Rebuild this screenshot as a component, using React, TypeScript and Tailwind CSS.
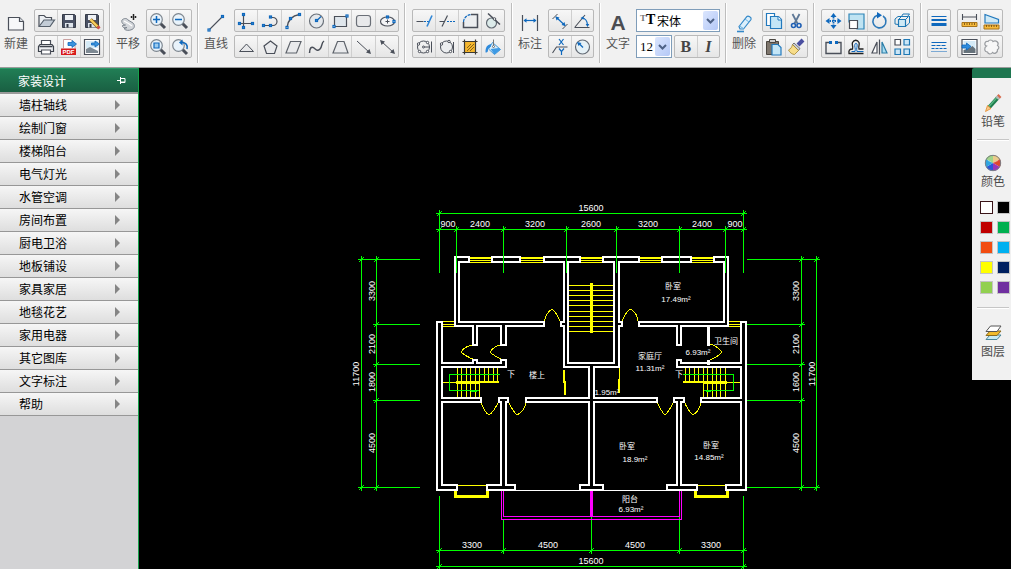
import type { ReactNode } from "react";

const MENU = [
  "墙柱轴线",
  "绘制门窗",
  "楼梯阳台",
  "电气灯光",
  "水管空调",
  "房间布置",
  "厨电卫浴",
  "地板铺设",
  "家具家居",
  "地毯花艺",
  "家用电器",
  "其它图库",
  "文字标注",
  "帮助",
];

const SWATCHES = [
  { name: "白色", cls: "bg-white border-[#3a1418]" },
  { name: "黑色", cls: "bg-black border-[#c4c4c4]" },
  { name: "红色", cls: "bg-[#c00000] border-[#c4c4c4]" },
  { name: "绿色", cls: "bg-[#00b050] border-[#c4c4c4]" },
  { name: "橙色", cls: "bg-[#f24c11] border-[#c4c4c4]" },
  { name: "天蓝", cls: "bg-[#00b0f0] border-[#c4c4c4]" },
  { name: "黄色", cls: "bg-[#ffff00] border-[#c4c4c4]" },
  { name: "深蓝", cls: "bg-[#002060] border-[#c4c4c4]" },
  { name: "浅绿", cls: "bg-[#92d050] border-[#c4c4c4]" },
  { name: "紫色", cls: "bg-[#7030a0] border-[#c4c4c4]" },
];

const INK = "#4a4f59";
const BLUE = "#0e68bd";

/* ---------- icons, all on a 20x20 grid ---------- */

function Svg({ children }: { children: ReactNode }) {
  return (
    <svg viewBox="0 0 20 20" className="size-5 shrink-0" fill="none" stroke={INK} strokeWidth="1.2" aria-hidden>
      {children}
    </svg>
  );
}

// blue grip point on a shape
function Dot({ x, y }: { x: number; y: number }) {
  return <rect x={x - 1} y={y - 1} width="2" height="2" fill="#fff" stroke={BLUE} strokeWidth="1.2" />;
}

function Magnifier({ children }: { children?: ReactNode }) {
  return (
    <Svg>
      <path d="M12.500 12.500l4.500 4.500" strokeWidth="3" />
      <circle cx="8.500" cy="8.500" r="5.800" fill="#e9f3fb" stroke="#7d868f" />
      {children}
    </Svg>
  );
}

const floppy = (
  <>
    <path d="M3.500 3.500h12l1 1v12h-13z" fill="#4a5164" stroke="#363c49" strokeWidth="1" />
    <path d="M6 4h8v5H6z" fill="#eef1f5" stroke="none" />
    <path d="M6 12h8v4.500H6z" fill="#dfe5ec" stroke="none" />
    <path d="M7.500 13h2v3.500h-2z" fill="#2f3542" stroke="none" />
  </>
);

const newIcon = (
  <Svg>
    <path d="M2.500 4.500h11l4 4v8.500h-15z" fill="#f7f8fa" />
    <path d="M13.500 4.500v4h4" fill="#dde1e6" />
  </Svg>
);

const panIcon = (
  <Svg>
    <path
      d="M4 7c2-2 5-2 6 0l5 3c2 2 2 5-1 6.500-3 1.500-7 1-8-1l3-1c-3 1-5-.5-4.500-2l3-.5C5 12 3 9 4 7z"
      fill="#d3d6da"
      stroke="#7c848e"
      strokeWidth="1"
    />
    <path d="M6 8c2 1 4 2 8 5" stroke="#fff" />
    <path d="M15.500 1v6M12.500 4h6M14.500 2h2M14.500 6h2M13.500 3v2M17.500 3v2" stroke="#222" strokeWidth="1" />
  </Svg>
);

const lineIcon = (
  <Svg>
    <path d="M3.500 16.500l13-13" strokeWidth="1.100" />
    <Dot x={3} y={17} />
    <Dot x={16.5} y={3.5} />
  </Svg>
);

const dimIcon = (
  <Svg>
    <path d="M2.500 2v16M17.500 2v16" />
    <path d="M4 7.500h12" stroke={BLUE} />
    <path d="M3.500 7.500l3-2.200v4.400zM16.500 7.500l-3-2.200v4.400z" fill={BLUE} stroke="none" />
  </Svg>
);

const textIcon = (
  <span className="flex h-5 items-center justify-center font-['Liberation_Sans',sans-serif] text-[21px] leading-5 font-bold text-[#4b4d52]">
    A
  </span>
);

const eraserIcon = (
  <Svg>
    <path d="M5 13.500L13 3.500c1-1 5 .5 4 3L9.500 16H6z" fill="#dceffb" stroke="#3488c8" />
    <path d="M5.500 13l4 2.500M11 6l4 3" stroke="#6cb2e0" strokeWidth="1" />
    <path d="M3 18.500h7" stroke="#3488c8" strokeWidth="1.600" />
  </Svg>
);

const fileTop = [
  {
    label: "打开",
    icon: (
      <Svg>
        <path d="M3 15V4.500h5l2 2h5.500V9" fill="#eceff3" />
        <path d="M3 15.500L8 9h10.500L14 15.500z" fill="#c3ccd6" stroke="#56606c" />
      </Svg>
    ),
  },
  { label: "保存", icon: <Svg>{floppy}</Svg> },
  {
    label: "另存为",
    icon: (
      <Svg>
        {floppy}
        <path d="M8.500 8.500l8 8" stroke="#8a5a10" strokeWidth="3.500" />
        <path d="M8.500 8.500l7 7" stroke="#f6d05f" strokeWidth="2.200" />
        <path d="M15.500 15.500l2 2" stroke="#d0504a" strokeWidth="3" />
      </Svg>
    ),
  },
];

const fileBottom = [
  {
    label: "打印",
    icon: (
      <Svg>
        <path d="M5.500 8V3.500h9V8" fill="#fff" />
        <path d="M4 7.500h12l1.500 2v5h-15v-5z" fill="#eceef1" stroke="#3c424b" />
        <path d="M3.500 9.500h13" stroke="#3c424b" strokeWidth="1.500" />
        <path d="M5.500 13h9v4h-9z" fill="#fff" />
      </Svg>
    ),
  },
  {
    label: "导出PDF",
    icon: (
      <Svg>
        <path d="M4.500 11V2.500h7.500l4 4v5" fill="#fff" stroke="#c9a0a0" strokeWidth="1" />
        <path d="M9 5.500h4v-2l4.500 3.500-4.500 3.500v-2H9z" fill="#3b93dc" stroke={BLUE} strokeWidth=".8" />
        <rect x="2" y="11.500" width="15" height="6.500" fill="#d81c1c" stroke="none" />
        <text
          x="9.500"
          y="17"
          textAnchor="middle"
          fontSize="6"
          fontWeight="700"
          fill="#fff"
          stroke="none"
          fontFamily="Liberation Sans, sans-serif"
        >
          PDF
        </text>
      </Svg>
    ),
  },
  {
    label: "导出图片",
    icon: (
      <Svg>
        <path d="M2.500 2.500h15v15h-15z" fill="#fff" />
        <path d="M4 4h12v7H4z" fill="#d5eaf6" stroke="none" />
        <path d="M4 16v-4l4-2 8 4v2z" fill="#7d8993" stroke="none" />
        <path d="M9.500 6h3.500V4l4.500 3-4.500 3V8H9.500z" fill="#3b93dc" stroke={BLUE} strokeWidth=".8" />
      </Svg>
    ),
  },
];

const viewTop = [
  { label: "放大", icon: <Magnifier><path d="M8.500 5v7M5 8.500h7" stroke={BLUE} strokeWidth="1.500" /></Magnifier> },
  { label: "缩小", icon: <Magnifier><path d="M5 8.500h7" stroke={BLUE} strokeWidth="1.500" /></Magnifier> },
];

const viewBottom = [
  { label: "窗口缩放", icon: <Magnifier><path d="M6 6h5v5H6z" stroke={BLUE} fill="#9ccbee" /></Magnifier> },
  {
    label: "上一视图",
    icon: (
      <Magnifier>
        <path d="M17 12c1-4-1-6.500-5.500-6.500" stroke={BLUE} strokeWidth="1.600" />
        <path d="M12.500 2.500L9 5.500l3.500 3z" fill={BLUE} stroke="none" />
      </Magnifier>
    ),
  },
];

const drawTop = [
  {
    label: "坐标轴",
    icon: (
      <Svg>
        <path d="M7.500 3.500v13M3.500 12.500h14" />
        <Dot x={7.5} y={3.5} />
        <Dot x={3.5} y={12.5} />
        <Dot x={16.5} y={12.5} />
        <Dot x={7.5} y={16.5} />
      </Svg>
    ),
  },
  {
    label: "多段线",
    icon: (
      <Svg>
        <path d="M3.500 14.500H13a4 4 0 0 0 0-8h-2" />
        <Dot x={3.5} y={14.5} />
        <Dot x={10.5} y={14.5} />
        <Dot x={10.5} y={6} />
      </Svg>
    ),
  },
  {
    label: "圆弧",
    icon: (
      <Svg>
        <path d="M4 16.500C5 9 9 4.500 16.500 3.500" strokeWidth="1.500" />
        <Dot x={4} y={16.5} />
        <Dot x={7.5} y={7.5} />
        <Dot x={16.5} y={3.5} />
      </Svg>
    ),
  },
  {
    label: "圆",
    icon: (
      <Svg>
        <circle cx="10.500" cy="10" r="7" fill="#e4e8ec" stroke="#6a717a" />
        <path d="M10.500 10l4.500-4.500" stroke={BLUE} />
        <Dot x={10.5} y={9.5} />
      </Svg>
    ),
  },
  {
    label: "矩形",
    icon: (
      <Svg>
        <path d="M4.500 5.500h12v10h-12z" fill="#dfe6ec" />
        <Dot x={17} y={5} />
        <Dot x={4} y={15.5} />
      </Svg>
    ),
  },
  {
    label: "圆角矩形",
    icon: (
      <Svg>
        <rect x="3.500" y="4.500" width="14" height="11" rx="2.500" fill="#e8e9eb" stroke="#6a6f77" />
      </Svg>
    ),
  },
  {
    label: "椭圆",
    icon: (
      <Svg>
        <ellipse cx="10.500" cy="10.500" rx="7" ry="4.500" fill="#f4f5f7" />
        <path d="M10.500 8.500v4M8.500 10.500h4" strokeWidth="1" />
        <Dot x={10.5} y={6} />
        <Dot x={17} y={10.5} />
      </Svg>
    ),
  },
];

const drawBottom = [
  { label: "三角形", icon: <Svg><path d="M3.500 14.500L10.500 7l7 7.500z" fill="#e6e7e9" strokeWidth="1" /></Svg> },
  { label: "多边形", icon: <Svg><path d="M10.500 4l6.500 5-2.500 7.500h-8L4 9z" fill="#e9eaec" /></Svg> },
  { label: "平行四边形", icon: <Svg><path d="M7.500 4.500H18L13.500 16H3z" fill="#e9eaec" stroke="#5f646c" /></Svg> },
  { label: "样条曲线", icon: <Svg><path d="M3.500 16c0-5 2-7 4.500-5s3.500 3.500 6 1S15 6 18 4" strokeWidth="1.500" /></Svg> },
  { label: "梯形", icon: <Svg><path d="M7.500 4.500h6.500L18 16H3z" fill="#e9eaec" stroke="#5f646c" /></Svg> },
  {
    label: "箭头",
    icon: (
      <Svg>
        <path d="M4 4l13 12" strokeWidth="1" />
        <path d="M18 17l-5-1.500 3.500-3.500z" fill={INK} stroke="none" />
      </Svg>
    ),
  },
  {
    label: "双向箭头",
    icon: (
      <Svg>
        <path d="M4 4l13 12" strokeWidth="1" />
        <path d="M18 17l-5-1.500 3.500-3.500zM3 3l5 1.500L4.500 8z" fill={INK} stroke="none" />
      </Svg>
    ),
  },
];

const editTop = [
  {
    label: "延伸",
    icon: (
      <Svg>
        <path d="M2.500 10.500h7" />
        <path d="M10 10.500h2M13 10.500h2" stroke={BLUE} />
        <path d="M13 15.500L18 4.500" stroke="#2f86d6" strokeWidth="1.600" />
      </Svg>
    ),
  },
  {
    label: "修剪",
    icon: (
      <Svg>
        <path d="M2.500 10.500h4.500M5 15.500L10.500 4.500" />
        <path d="M10 10.500h2M13 10.500h2M16 10.500h2" stroke={BLUE} />
      </Svg>
    ),
  },
  {
    label: "圆角",
    icon: (
      <Svg>
        <path d="M3.500 16.500V11a8 8 0 0 1 8-7.500h6v13z" fill="#eceef0" stroke="none" />
        <path d="M11 3.500h6.500v13h-14V11" strokeWidth="1.500" />
        <path d="M3.500 11a8 8 0 0 1 7.500-7.500" stroke={BLUE} strokeDasharray="3 1" />
      </Svg>
    ),
  },
  {
    label: "切线",
    icon: (
      <Svg>
        <circle cx="8.500" cy="12" r="5" fill="#dcebea" stroke="#636b74" />
        <path d="M5 2.500l12 11" strokeWidth="1.500" />
        <circle cx="11.500" cy="8" r="1.300" fill="#fff" strokeWidth="1" />
      </Svg>
    ),
  },
];

const editBottom = [
  {
    label: "圆心捕捉",
    icon: (
      <Svg>
        <circle cx="9.500" cy="10" r="6" strokeWidth="1" />
        <circle cx="9.500" cy="10" r="1" strokeWidth="1" />
        <path d="M10.500 10h5M17.500 4.500v11" strokeWidth="1" />
        <g fill="#fff" strokeWidth="1">
          <circle cx="4.500" cy="7" r="1.200" />
          <circle cx="5.500" cy="14.500" r="1.200" />
          <circle cx="13.500" cy="5.500" r="1.200" />
          <circle cx="13.500" cy="14.500" r="1.200" />
        </g>
      </Svg>
    ),
  },
  {
    label: "象限捕捉",
    icon: (
      <Svg>
        <circle cx="9.500" cy="10" r="6" fill="#eceef0" strokeWidth="1" />
        <path d="M16.500 5v11" strokeWidth="1" />
        <g fill="#fff" strokeWidth="1">
          <circle cx="4.500" cy="7" r="1.200" />
          <circle cx="12" cy="4.500" r="1.200" />
          <circle cx="13.500" cy="14.500" r="1.200" />
        </g>
      </Svg>
    ),
  },
  {
    label: "填充图案",
    icon: (
      <Svg>
        <path d="M4.500 4.500h11v11h-11z" fill="#f4b62e" stroke="none" />
        <path d="M7 11l4-4M7 14l7-7M10 14l4-4" stroke="#7d5a14" strokeWidth=".9" />
        <path d="M2.500 4.500h15M2.500 15.500h15M4.500 2.500v15M15.500 2.500v15" stroke="#3b3934" strokeWidth="1.200" />
      </Svg>
    ),
  },
  {
    label: "颜料桶",
    icon: (
      <Svg>
        <path d="M9.500 5.500l8 7-6 5-6-5.500z" fill="#d6ecfa" stroke="#4798d6" strokeWidth="1" />
        <path d="M7.500 12l8.500-1 1.500 1.500-6 5z" fill="#3e9ae4" stroke="none" />
        <path d="M8 7C4 8 2.500 10 2.500 15.500c2 .5 2.500-1 2.500-2.500s1.500-2.500 3-3.500z" fill="#2f8bdc" stroke="none" />
        <path d="M10.500 2.500v6" stroke="#777" strokeWidth="1" />
        <circle cx="10.500" cy="9.500" r="1" fill="#fff" stroke="#555" strokeWidth=".8" />
      </Svg>
    ),
  },
];

const dimTop = [
  {
    label: "对齐标注",
    icon: (
      <Svg>
        <path d="M2.500 8l5-5M12.500 18l5-5" strokeWidth="1" />
        <path d="M6 6l9 8.500" stroke={BLUE} />
        <path d="M5.500 5.500l4 1-3 3zM15.500 15l-4-1 3-3z" fill={BLUE} stroke="none" />
      </Svg>
    ),
  },
  {
    label: "角度标注",
    icon: (
      <Svg>
        <path d="M2.500 16.500h15M3 16L13 4" strokeWidth="1.100" />
        <path d="M10 7c3 0 5.500 3 5.500 7" stroke={BLUE} />
        <path d="M15.500 16l-1.800-3h3.600zM8.500 7l3-1.800v3.600z" fill={BLUE} stroke="none" />
      </Svg>
    ),
  },
];

const dimBottom = [
  {
    label: "坐标标注",
    icon: (
      <Svg>
        <path d="M2.500 16l4-6h11" strokeWidth="1.100" />
        <path d="M9 2l4.500 6M13.500 2L9 8M9 11.500l2.500 3 2.500-3M11.500 14.500V18" stroke={BLUE} />
      </Svg>
    ),
  },
  {
    label: "半径标注",
    icon: (
      <Svg>
        <circle cx="10.500" cy="10" r="7" fill="#e6f1f6" stroke="#646b75" />
        <path d="M11 10.500L7 6.500" stroke={BLUE} />
        <path d="M5 5l4.500 1L6.500 9z" fill={BLUE} stroke="none" />
      </Svg>
    ),
  },
];

const clipTop = [
  {
    label: "复制",
    icon: (
      <Svg>
        <path d="M2.500 2.500h8v12h-8z" fill="#fff" stroke="#2279bd" />
        <path d="M6.500 5.500h8l3 3v9h-11z" fill="#c4e6f7" stroke="#2279bd" />
        <path d="M14 5.500v3.500h3.500" fill="#fff" stroke="#2279bd" strokeWidth="1" />
      </Svg>
    ),
  },
  {
    label: "剪切",
    icon: (
      <Svg>
        <path d="M6.500 3l5 9.500M13.500 3l-5 9.500" stroke="#5e7896" strokeWidth="1.800" />
        <circle cx="7.500" cy="14.500" r="2" stroke="#1f5fb4" strokeWidth="1.600" />
        <circle cx="13" cy="14.500" r="2" stroke="#1f5fb4" strokeWidth="1.600" />
      </Svg>
    ),
  },
];

const clipBottom = [
  {
    label: "粘贴",
    icon: (
      <Svg>
        <path d="M2.500 4.500h12v13h-12z" fill="#7d756c" stroke="#4b4640" strokeWidth="1" />
        <path d="M5.500 2.500h6v3h-6z" fill="#ccc" stroke="#4b4640" strokeWidth="1" />
        <path d="M8 7.500h6l3 3v7.500H8z" fill="#c4e6f7" stroke="#2279bd" />
      </Svg>
    ),
  },
  {
    label: "格式刷",
    icon: (
      <Svg>
        <path d="M17 3l-5 5" stroke="#4a4fa0" strokeWidth="4" />
        <path d="M8 6l6 5.500-1.500 2L6.500 7.500z" fill="#c9ccd4" stroke="#555" strokeWidth=".8" />
        <path d="M6.500 7.500l6 6-4 4c-2 0-5-2-6-4.500 2-1 3.500-3 4-5.500z" fill="#f7dd8a" stroke="#a5852f" strokeWidth=".8" />
      </Svg>
    ),
  },
];

const modifyTop = [
  {
    label: "移动",
    icon: (
      <Svg>
        <path d="M10.500 2l3 4h-6zM10.500 18l3-4h-6zM2.500 10l4-3v6zM18.500 10l-4-3v6z" fill={BLUE} stroke="none" />
        <path d="M10.500 6v8M6.500 10h8" strokeWidth="1.800" stroke={BLUE} strokeDasharray="1.500 1" />
      </Svg>
    ),
  },
  {
    label: "缩放",
    icon: (
      <Svg>
        <path d="M3 3h15v15H11v-7H3z" fill="#bfe3f2" stroke="#2f86b8" />
        <path d="M3.500 9.500h8v8h-8z" fill="#fff" />
      </Svg>
    ),
  },
  {
    label: "旋转",
    icon: (
      <Svg>
        <path d="M8.500 4.200a6.500 6.500 0 1 0 5.500.8" stroke="#2c78b8" strokeWidth="1.600" />
        <path d="M8 1l5 3.200-5 3.300z" fill={BLUE} stroke="none" />
      </Svg>
    ),
  },
  {
    label: "三维",
    icon: (
      <Svg>
        <path d="M6.500 8.500h7v7h-7z" fill="#cfeaf6" stroke="#1f78b4" />
        <path
          d="M6.500 8.500l3-3h7l-3 3M13.500 15.500l4-3.500V5M3 8l3-2.500h5M3 8v5l3 .5M11 3h6.500l-2 2.500M9.500 5.500L11 3"
          stroke="#1f78b4"
          strokeWidth="1"
        />
      </Svg>
    ),
  },
];

const modifyBottom = [
  {
    label: "打断",
    icon: (
      <Svg>
        <path d="M6 5.500H3v11h15v-11h-3" strokeWidth="1.400" />
        <path d="M6 4h3v3H6zM12 4h3v3h-3z" fill={BLUE} stroke="none" />
      </Svg>
    ),
  },
  {
    label: "偏移",
    icon: (
      <Svg>
        <path
          d="M17.500 12H13c-1-3 1-4 0-6.500-1.500-3-5-3-6.500 0-1 2.500 1 3.500 0 6.500-3 0-4 1.500-3.500 4.500h14.500"
          stroke="#222"
          strokeWidth="1.300"
        />
        <path d="M5.500 14.500H9c1-3-1-5 0-7.500.5-1 1.500-1 2 0 .7 3-1 4 0 7.500h6.500" stroke={BLUE} strokeWidth="1" />
      </Svg>
    ),
  },
  {
    label: "镜像",
    icon: (
      <Svg>
        <path d="M8 5v11H3z" fill="#fff" />
        <path d="M13 5v11h5z" fill="#a8dcf0" stroke="#2b7da8" />
        <path d="M10.500 2.500v15" />
      </Svg>
    ),
  },
  {
    label: "阵列",
    icon: (
      <Svg>
        <path d="M3 2.500h5.500V8H3z" fill="#fff" />
        <path d="M12 2.500h5.500V8H12zM3 12h5.500v5.500H3zM12 12h5.500v5.500H12z" fill="#cbe6f7" stroke="#1f78b4" />
      </Svg>
    ),
  },
];

const measureTop = [
  {
    label: "测距",
    icon: (
      <Svg>
        <path d="M3.500 3v6M17.500 3v6M4 6h13" strokeWidth="1.100" />
        <path d="M3 11.500h15v4H3z" fill="#f6b93b" stroke="#a9741a" strokeWidth="1" />
        <path d="M5.500 12v2M8 12v2M10.500 12v2M13 12v2M15.500 12v2" stroke="#6d4a10" strokeWidth=".8" />
      </Svg>
    ),
  },
  {
    label: "测面积",
    icon: (
      <Svg>
        <path d="M4 3.500l13.500 5V12H4z" fill="#cfeaf7" stroke="#2279bd" />
        <path d="M3 14h15v4H3z" fill="#f6b93b" stroke="#a9741a" strokeWidth="1" />
        <path d="M5.500 14v2M8 14v2M10.500 14v2M13 14v2M15.500 14v2" stroke="#6d4a10" strokeWidth=".8" />
      </Svg>
    ),
  },
];

const measureBottom = [
  {
    label: "插入图片",
    icon: (
      <Svg>
        <path d="M3 2.500h15v15H3z" fill="#fff" />
        <path d="M4.500 4h12v8h-12z" fill="#d5eaf6" stroke="none" />
        <path d="M4.500 16v-3l6-2 3-2 3 3v4z" fill="#66727b" stroke="none" />
        <path d="M3 8h4.500V6l4.500 3.500L7.500 13v-2H3z" fill="#2f8bdc" stroke={BLUE} strokeWidth=".8" />
      </Svg>
    ),
  },
  {
    label: "云线",
    icon: (
      <Svg>
        <path
          d="M5.500 9c-3-1-1.500-5.500 1.500-4.500 1-2 4-2 5 0 3-2 6.500 1.500 4.500 4 2 1 1.500 3.500 0 4 .5 3-3 5-5 3-2 2.500-4.500 1.500-5-.5-3.500 0-3.500-4.500-1-6z"
          fill="#f7f7f7"
          stroke="#9a9da1"
        />
      </Svg>
    ),
  },
];

const weightTop = [
  {
    label: "线宽",
    icon: (
      <Svg>
        <path d="M2.500 5.500h15" stroke={BLUE} strokeWidth="1" />
        <path d="M2.500 9h15" stroke={BLUE} strokeWidth="2" />
        <path d="M2.500 13.500h15" stroke={BLUE} strokeWidth="3" />
      </Svg>
    ),
  },
];

const weightBottom = [
  {
    label: "线型",
    icon: (
      <Svg>
        <g stroke={BLUE} strokeWidth="1">
          <path d="M2.500 5.500h15" />
          <path d="M2.500 8.500h15" strokeDasharray="4 1" />
          <path d="M2.500 11.500h15" strokeDasharray="3 1" />
          <path d="M2.500 14.500h15" strokeDasharray="1 1" />
        </g>
      </Svg>
    ),
  },
];

const letterIcons = [
  { label: "粗体", icon: <span className="font-['Liberation_Serif',serif] text-base font-bold">B</span> },
  { label: "斜体", icon: <span className="font-['Liberation_Serif',serif] text-base font-bold italic">I</span> },
];

/* ---------- toolbar pieces ---------- */

type Tool = { label: string; icon: ReactNode };

function ToolRow({ tools, className = "" }: { tools: Tool[]; className?: string }) {
  return (
    <div
      className={`flex h-[23px] overflow-hidden rounded-xs border border-[#b9b9b9] bg-linear-to-b from-[#f7f7f7] to-[#e6e6e6] ${className}`}
    >
      {tools.map((t) => (
        <button
          key={t.label}
          type="button"
          aria-label={t.label}
          className="flex min-w-0 flex-1 items-center justify-center border-l border-[#cfcfcf] text-[#444] first:border-l-0 hover:bg-white"
        >
          {t.icon}
        </button>
      ))}
    </div>
  );
}

function Rows({ top, bottom, className }: { top: Tool[]; bottom: Tool[]; className: string }) {
  return (
    <div className="flex shrink-0 flex-col gap-[3px]">
      <ToolRow tools={top} className={className} />
      <ToolRow tools={bottom} className={className} />
    </div>
  );
}

function BigTool({ label, children }: { label: string; children: ReactNode }) {
  return (
    <button type="button" className="flex w-6 shrink-0 flex-col items-center gap-0.5 self-start pt-1 text-[#555]">
      {children}
      <span className="text-xs leading-4 whitespace-nowrap">{label}</span>
    </button>
  );
}

function Group({ children, className = "px-[5px]" }: { children: ReactNode; className?: string }) {
  return <div className={`flex shrink-0 gap-1.5 ${className}`}>{children}</div>;
}

function Separator() {
  return <div className="-mt-1.5 h-[60px] w-0.5 shrink-0 border-r border-l border-r-white border-l-[#bdbdbd]" />;
}

function DropArrow() {
  return (
    <span className="pointer-events-none absolute top-0.5 right-0.5 flex h-[19px] w-[15px] items-center justify-center rounded-xs bg-linear-to-br from-[#dbe6fe] to-[#b4c8f6]">
      <svg viewBox="0 0 9 6" className="h-1.5 w-[9px]" fill="none" stroke="#4d6185" strokeWidth="2" aria-hidden>
        <path d="M1 1l3.500 3.500L8 1" />
      </svg>
    </span>
  );
}

function Toolbar() {
  return (
    <header className="flex h-[68px] shrink-0 overflow-hidden border-b border-[#9b9b9b] bg-[#f1f1f1] pt-[9px]">
      <Group className="pr-[5px] pl-1">
        <BigTool label="新建">{newIcon}</BigTool>
        <Rows top={fileTop} bottom={fileBottom} className="w-[70px]" />
      </Group>
      <Separator />
      <Group>
        <BigTool label="平移">{panIcon}</BigTool>
        <Rows top={viewTop} bottom={viewBottom} className="w-[46px]" />
      </Group>
      <Separator />
      <Group>
        <BigTool label="直线">{lineIcon}</BigTool>
        <Rows top={drawTop} bottom={drawBottom} className="w-[165px]" />
      </Group>
      <Separator />
      <Group className="px-1.5">
        <Rows top={editTop} bottom={editBottom} className="w-[93px]" />
      </Group>
      <Separator />
      <Group>
        <BigTool label="标注">{dimIcon}</BigTool>
        <Rows top={dimTop} bottom={dimBottom} className="w-[46px]" />
      </Group>
      <Separator />
      <Group>
        <BigTool label="文字">{textIcon}</BigTool>
        <div className="flex w-[84px] shrink-0 flex-col gap-[3px]">
          <div className="relative">
            <select
              aria-label="字体"
              className="block h-[23px] w-full appearance-none border border-[#7f9db9] bg-white pl-5 text-xs leading-4 text-black"
            >
              <option>宋体</option>
              <option>黑体</option>
            </select>
            {/* TrueType mark in front of the font name */}
            <span className="pointer-events-none absolute top-[3px] left-1 flex font-['Liberation_Serif',serif] leading-4 font-bold text-black">
              <span className="text-[9px] leading-3 text-[#777]">T</span>
              <span className="text-sm leading-4">T</span>
            </span>
            <DropArrow />
          </div>
          <div className="flex gap-0.5">
            <div className="relative">
              <select
                aria-label="字号"
                className="block h-[23px] w-9 appearance-none border border-[#7f9db9] bg-white pl-[3px] font-['Liberation_Serif',serif] text-[13px] leading-4 text-black"
              >
                <option>12</option>
                <option>14</option>
                <option>16</option>
              </select>
              <DropArrow />
            </div>
            <ToolRow tools={letterIcons} className="w-[46px]" />
          </div>
        </div>
      </Group>
      <Separator />
      <Group>
        <BigTool label="删除">{eraserIcon}</BigTool>
        <Rows top={clipTop} bottom={clipBottom} className="w-[46px]" />
      </Group>
      <Separator />
      <Group className="px-1.5">
        <Rows top={modifyTop} bottom={modifyBottom} className="w-[93px]" />
      </Group>
      <Separator />
      <Group>
        <Rows top={weightTop} bottom={weightBottom} className="w-6" />
        <Rows top={measureTop} bottom={measureBottom} className="w-[46px]" />
      </Group>
    </header>
  );
}

function Sidebar() {
  return (
    <nav className="w-[139px] shrink-0 border-r border-[#16a24c] bg-[#d3d3d5]">
      <div className="flex h-[26px] items-center justify-between border-t border-b-2 border-t-[#2b9a68] border-b-[#9a9a9a] bg-linear-to-b from-[#217e55] to-[#195f42] pr-3 pl-[18px] text-xs text-white">
        家装设计
        <button type="button" aria-label="固定">
          <svg viewBox="0 0 9 7" className="h-[7px] w-[9px]" fill="none" stroke="#fff" aria-hidden>
            <path d="M0 3.500h3M3.500 0v7M3.500 1.500h4.500v4h-4.500M3.500 5h4.500" />
          </svg>
        </button>
      </div>
      <ul>
        {MENU.map((item) => (
          <li key={item}>
            <button
              type="button"
              className="flex h-[23px] w-full items-center justify-between border-b border-[#979797] bg-linear-to-b from-[#f6f6f6] to-[#dedede] pr-[18px] pl-[19px] text-xs text-black hover:to-white"
            >
              {item}
              <svg viewBox="0 0 5 10" className="h-2.5 w-[5px]" fill="#858585" aria-hidden>
                <path d="M0 0l5 5-5 5z" />
              </svg>
            </button>
          </li>
        ))}
      </ul>
    </nav>
  );
}

/* ---------- floor plan ---------- */

const WALLS = [
  "M459 322V262H469V257H455V326H473V345H477V326H501V345H506V326H544V322H459",
  "M492 257H520V262H492Z",
  "M580 257H544V262H564V322H561V326H564V367H589V398H526V402H589V485H580V490H603V485H594V402H657V398H594V367H619V326H622V322H619V262H639V257H603V262H614V363H568V262H580Z",
  "M662 257H691V262H662Z",
  "M709 326H728V257H714V262H724V322H639V326H677V345H681V326H709",
  // left wing
  "M442 322H437V490H457V485H442V402H481V398H442V367H506V360H501V363H477V360H473V363H442Z",
  "M499 398H508V402H506V485H515V490H487V485H501V402H499Z",
  // right wing
  "M741 322H746V490H726V485H741V402H701V398H741V367H677V360H681V363H741Z",
  "M674 398H684V402H681V485H697V490H667V485H677V402H674Z",
];

const WINDOWS = [
  [470, 491],
  [521, 543],
  [581, 602],
  [640, 661],
  [692, 713],
];

const DOORS = [
  "M544 322Q546 313 552 309Q557 313 560 321",
  "M622 322Q625 313 630 309Q637 312 638 321",
  "M481 402Q484 412 489 415Q493 413 499 401",
  "M508 401Q512 410 517 415Q525 411 526 401",
  "M657 401Q660 410 665 415Q670 410 674 401",
  "M684 401Q688 411 693 415Q700 411 701 401",
  "M473 345Q465 346 461 352Q465 356 475 360",
  "M501 345Q494 346 490 352Q494 356 503 360",
  "M710 344Q717 346 722 352Q718 357 710 360",
];

const STAIRS = [285, 290, 295, 300, 305, 311, 316, 321, 326, 331];
const LEFT_STEPS = [457, 461, 466, 470, 475, 479, 484, 488, 493, 497];
const RIGHT_STEPS = [685, 689, 694, 698, 703, 707, 712, 716, 720, 725];

const TOP_TICKS = [439, 456, 503, 566, 616, 679, 725, 743];
const SIDE_TICKS = [259, 324, 364, 400, 487];
const BOTTOM_TICKS = [439, 503, 591, 679, 743];

const DIMS: [number, number, string][] = [
  [591, 211, "15600"],
  [448, 227, "900"],
  [480, 227, "2400"],
  [535, 227, "3200"],
  [591, 227, "2600"],
  [648, 227, "3200"],
  [702, 227, "2400"],
  [735, 227, "900"],
  [472, 548, "3300"],
  [548, 548, "4500"],
  [635, 548, "4500"],
  [711, 548, "3300"],
  [591, 564, "15600"],
];

const SIDE_DIMS: [number, number, string][] = [
  [375, 291, "3300"],
  [375, 344, "2100"],
  [375, 382, "1800"],
  [375, 443, "4500"],
  [359, 374, "11700"],
  [799, 291, "3300"],
  [799, 344, "2100"],
  [799, 382, "1600"],
  [799, 443, "4500"],
  [815, 374, "11700"],
];

const AREAS: [number, number, string][] = [
  [676, 302, "17.49m²"],
  [698, 355, "6.93m²"],
  [650, 371, "11.31m²"],
  [607, 395, "1.95m²"],
  [635, 462, "18.9m²"],
  [709, 460, "14.85m²"],
  [631, 512, "6.93m²"],
];

const ROOMS: [number, number, string][] = [
  [673, 289, "卧室"],
  [726, 344, "卫生间"],
  [650, 359, "家庭厅"],
  [627, 449, "卧室"],
  [711, 448, "卧室"],
  [630, 502, "阳台"],
  [511, 377, "下"],
  [537, 378, "楼上"],
  [679, 377, "下"],
];

function Tick({ x, y }: { x: number; y: number }) {
  return <path d={`M${x - 2} ${y + 3}l5-5M${x - 3} ${y + 0.5}h7M${x + 0.5} ${y - 3}v7`} />;
}

function FloorPlan() {
  return (
    <svg className="block size-full" fill="none" shapeRendering="crispEdges" role="img" aria-label="户型平面图">
      <g transform="translate(-139 -68)">
        <g stroke="#ffff00">
          {WINDOWS.map(([a, b]) => (
            <path key={a} d={`M${a} 257.500H${b}M${a} 258.500H${b}M${a} 260.500H${b}M${a} 262.500H${b}`} />
          ))}
          <path d="M442 321.500H455M442 324.500H455M442 326.500H455M728 321.500H741M728 324.500H741M728 326.500H741" />
          {STAIRS.map((y) => (
            <path key={y} d={`M569 ${y + 0.5}H613`} />
          ))}
          <path d="M591.500 283V333" strokeWidth="3" />
          {LEFT_STEPS.map((x, i) => (
            <path key={x} d={`M${x + 0.5} 368V${i < 6 ? 397 : 382}`} />
          ))}
          {RIGHT_STEPS.map((x, i) => (
            <path key={x} d={`M${x + 0.5} 368V${i > 3 ? 397 : 382}`} />
          ))}
          <path d="M443 382.500H456M727 382.500H740M619.500 368V380" />
          <path d="M456 382H499M683 382H727M564 370V383M565 381V395M619 379V393" strokeWidth="2" />
          <path d="M456 382.500H480M704 382.500H727" strokeWidth="3" />
          {DOORS.map((d) => (
            <path key={d} d={d} />
          ))}
        </g>

        <g stroke="#00ff00">
          <path d="M500 374.500H449.500V390.500H479M683 374.500H733.500V390.500H704" />
          <path d="M471 391H477M706 391H711" strokeWidth="2" />
        </g>

        <g stroke="#ffffff" strokeWidth="2" strokeLinecap="square">
          {WALLS.map((d) => (
            <path key={d} d={d} />
          ))}
          <path d="M708.500 327V344M708.500 361V363" strokeWidth="3" />
          <path d="M516 490.500H580M604 490.500H667" strokeWidth="1" />
        </g>

        <g stroke="#ffff00">
          <path d="M458 485.500H486M698 485.500H725" />
          <path d="M455.500 491V496.500H487.500V491M695.500 491V496.500H727.500V491" strokeWidth="3" />
        </g>

        {/* dimension chains */}
        <g stroke="#00ff00">
          <path d="M436 213.500H746M436 229.500H746M439.500 211V273M743.500 211V273" />
          {TOP_TICKS.map((x) => (
            <g key={x}>
              <path d={`M${x + 0.5} 226V273`} />
              <Tick x={x} y={229} />
            </g>
          ))}
          <Tick x={439} y={213} />
          <Tick x={743} y={213} />

          <path d="M361.500 257V490M376.500 257V490M801.500 257V490M816.500 257V490" />
          {SIDE_TICKS.map((y) => (
            <g key={y}>
              <path d={`M374 ${y + 0.5}H420M747 ${y + 0.5}H804`} />
              <Tick x={376} y={y} />
              <Tick x={801} y={y} />
            </g>
          ))}
          <path d="M358 259.500H376M358 487.500H376M801 259.500H820M801 487.500H820" />
          <Tick x={361} y={259} />
          <Tick x={361} y={487} />
          <Tick x={816} y={259} />
          <Tick x={816} y={487} />

          <path d="M436 550.500H746M436 566.500H746M439.500 496V569M743.500 496V569" />
          <path d="M503.500 520V553M591.500 496V553M679.500 496V553" />
          {BOTTOM_TICKS.map((x) => (
            <Tick key={x} x={x} y={550} />
          ))}
          <Tick x={439} y={566} />
          <Tick x={743} y={566} />
        </g>

        {/* balcony rail */}
        <g stroke="#ff00ff">
          <path d="M501.500 491V519.500H681.500V491M503.500 491V516.500H679.500V491M590.500 491V516M591.500 491V516M592.500 491V516" />
        </g>

        <g fill="#ffffff" textAnchor="middle" className="font-['Liberation_Sans',sans-serif] text-[9px]">
          {DIMS.map(([x, y, t]) => (
            <text key={`${x}-${y}`} x={x} y={y}>
              {t}
            </text>
          ))}
          {SIDE_DIMS.map(([x, y, t]) => (
            <text key={`${x}-${y}`} transform={`translate(${x} ${y}) rotate(-90)`}>
              {t}
            </text>
          ))}
        </g>
        <g fill="#ffffff" textAnchor="middle" className="font-['Liberation_Sans',sans-serif] text-[8px]">
          {AREAS.map(([x, y, t]) => (
            <text key={`${x}-${y}`} x={x} y={y}>
              {t}
            </text>
          ))}
        </g>
        <g fill="#ffffff" textAnchor="middle" className="text-[8px]">
          {ROOMS.map(([x, y, t]) => (
            <text key={`${x}-${y}`} x={x} y={y}>
              {t}
            </text>
          ))}
        </g>
      </g>
    </svg>
  );
}

/* ---------- right palette ---------- */

function PaletteTool({ label, children }: { label: string; children: ReactNode }) {
  return (
    <button type="button" className="flex w-full flex-col items-center text-xs leading-4 text-[#4a4a4a]">
      {children}
      {label}
    </button>
  );
}

function Palette() {
  return (
    <aside className="absolute top-0 right-0 flex h-[312px] w-[39px] flex-col rounded-tl-xs border-t-10 border-[#1e7650] bg-[#f1f1f1] pl-[3px]">
      <div className="pt-[15px]">
        <PaletteTool label="铅笔">
          <Svg>
            <path d="M6 14.500L15 4.500" stroke="#1f7d4d" strokeWidth="4" />
            <path d="M6 13.500L14 4.500" stroke="#57b884" strokeWidth="1.200" />
            <path d="M14 5.500L16 3.500" stroke="#b7b7b7" strokeWidth="4" />
            <path d="M15.500 4L17 2.500" stroke="#d86a4c" strokeWidth="4" />
            <path d="M4.500 12.500l3.500 3L2.500 18.500z" fill="#f5c98a" stroke="#e88a2a" strokeWidth=".8" />
          </Svg>
        </PaletteTool>
      </div>
      <hr className="mx-0.5 mt-2.5 border-t border-b border-t-[#c6c6c6] border-b-white" />
      <div className="pt-3">
        <PaletteTool label="颜色">
          <Svg>
            <g stroke="none">
              <path d="M10 10V2A8 8 0 0 1 16.900 6z" fill="#e0b04e" />
              <path d="M10 10L16.900 6A8 8 0 0 1 16.900 14z" fill="#e0482f" />
              <path d="M10 10L16.900 14A8 8 0 0 1 10 18z" fill="#9a35b8" />
              <path d="M10 10V18A8 8 0 0 1 3.100 14z" fill="#2a58d8" />
              <path d="M10 10L3.100 14A8 8 0 0 1 3.100 6z" fill="#2fa5e0" />
              <path d="M10 10L3.100 6A8 8 0 0 1 10 2z" fill="#6fbf4c" />
              <ellipse cx="10" cy="6" rx="6" ry="3.500" fill="#fff" opacity=".35" />
            </g>
            <circle cx="10" cy="10" r="7.700" stroke="#7b7f86" strokeWidth="1" />
          </Svg>
        </PaletteTool>
      </div>
      <div className="mt-3 grid grid-cols-2 gap-x-1 gap-y-[7px] pr-px pl-[5px]">
        {SWATCHES.map((s) => (
          <button key={s.name} type="button" aria-label={s.name} className={`size-[13px] border ${s.cls}`} />
        ))}
      </div>
      <hr className="mx-0.5 mt-[13px] border-t border-b border-t-[#c6c6c6] border-b-white" />
      <div className="pt-3.5">
        <PaletteTool label="图层">
          <Svg>
            <path d="M3 16.500l4-4.500h11l-4 4.500z" fill="#c6ebf5" stroke="#4a8698" strokeWidth="1" />
            <path d="M3 12.500L7 8h11l-4 4.500z" fill="#f1bb2c" stroke="#8a6a1c" strokeWidth="1" />
            <path d="M3 8.500L7.500 3h10.500l-4 5.500z" fill="#fff" stroke="#555" strokeWidth="1" />
          </Svg>
        </PaletteTool>
      </div>
    </aside>
  );
}

export default function App() {
  return (
    <div className="flex h-screen flex-col bg-black font-['Noto_Sans_CJK_SC',sans-serif]">
      <Toolbar />
      <div className="flex min-h-0 flex-1">
        <Sidebar />
        <main className="relative min-w-0 flex-1 overflow-hidden bg-black">
          <FloorPlan />
          <Palette />
        </main>
      </div>
    </div>
  );
}
